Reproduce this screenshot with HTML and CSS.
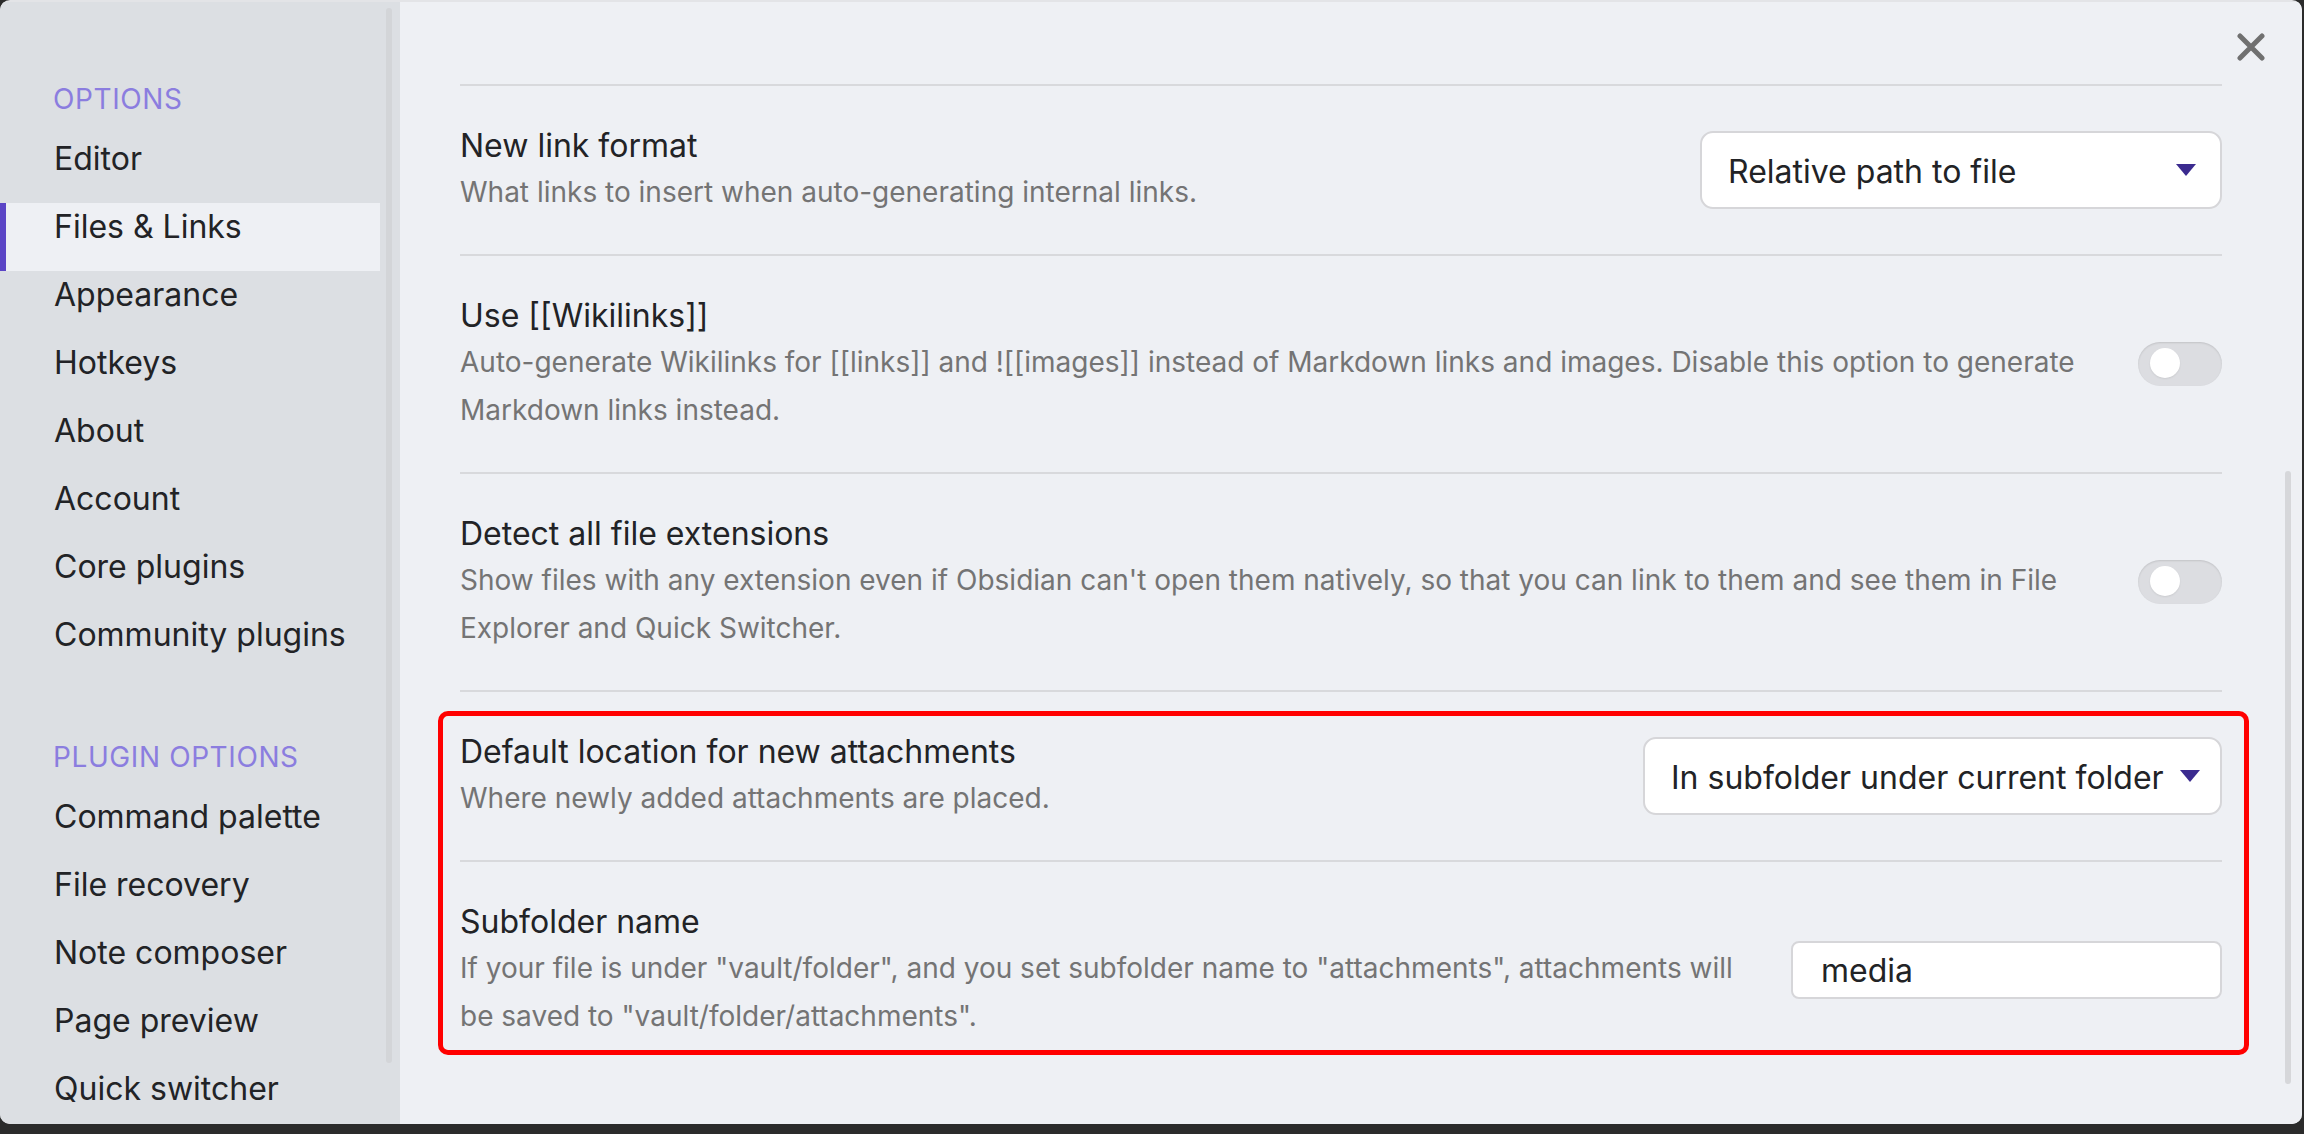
FILE: index.html
```html
<!DOCTYPE html>
<html lang="en">
<head>
<meta charset="utf-8">
<title>Settings — Files &amp; Links</title>
<link rel="stylesheet" href="styles.css">
</head>
<body>
<div class="window">
  <nav class="sidebar">
    <div class="nav-header">Options</div>
    <div class="nav-item">Editor</div>
    <div class="nav-item is-active">Files &amp; Links</div>
    <div class="nav-item">Appearance</div>
    <div class="nav-item">Hotkeys</div>
    <div class="nav-item">About</div>
    <div class="nav-item">Account</div>
    <div class="nav-item">Core plugins</div>
    <div class="nav-item">Community plugins</div>
    <div class="nav-header nav-header-second">Plugin options</div>
    <div class="nav-item">Command palette</div>
    <div class="nav-item">File recovery</div>
    <div class="nav-item">Note composer</div>
    <div class="nav-item">Page preview</div>
    <div class="nav-item">Quick switcher</div>
    <div class="sidebar-scroll"></div>
  </nav>
  <main class="content">
    <button class="close" aria-label="Close">
      <svg viewBox="0 0 28 28" width="28" height="28"><path d="M3 3 L25 25 M25 3 L3 25" stroke="#707070" stroke-width="5" stroke-linecap="round" fill="none"/></svg>
    </button>
    <div class="content-scroll"></div>
    <div class="settings">
      <div class="setting">
        <div class="info">
          <div class="name">New link format</div>
          <div class="desc">What links to insert when auto-generating internal links.</div>
        </div>
        <div class="control">
          <div class="dropdown dropdown-link"><span>Relative path to file</span><i class="caret"></i></div>
        </div>
      </div>
      <div class="setting">
        <div class="info">
          <div class="name">Use [[Wikilinks]]</div>
          <div class="desc">Auto-generate Wikilinks for [[links]] and ![[images]] instead of Markdown links and images. Disable this option to generate Markdown links instead.</div>
        </div>
        <div class="control">
          <div class="toggle"><div class="knob"></div></div>
        </div>
      </div>
      <div class="setting">
        <div class="info">
          <div class="name">Detect all file extensions</div>
          <div class="desc">Show files with any extension even if Obsidian can't open them natively, so that you can link to them and see them in File Explorer and Quick Switcher.</div>
        </div>
        <div class="control">
          <div class="toggle"><div class="knob"></div></div>
        </div>
      </div>
      <div class="highlight">
        <div class="setting">
          <div class="info">
            <div class="name">Default location for new attachments</div>
            <div class="desc">Where newly added attachments are placed.</div>
          </div>
          <div class="control">
            <div class="dropdown dropdown-attach"><span>In subfolder under current folder</span><i class="caret"></i></div>
          </div>
        </div>
        <div class="setting">
          <div class="info">
            <div class="name">Subfolder name</div>
            <div class="desc">If your file is under "vault/folder", and you set subfolder name to "attachments", attachments will be saved to "vault/folder/attachments".</div>
          </div>
          <div class="control">
            <div class="text-input">media</div>
          </div>
        </div>
      </div>
    </div>
  </main>
</div>
</body>
</html>
```
FILE: styles.css
```css
* { box-sizing: border-box; }

html, body {
  margin: 0;
  height: 1134px;
  overflow: hidden;
  background: #2b2b2b;
  font-family: Inter, "Noto Sans", sans-serif;
}

.window {
  width: 2302px;
  height: 1124px;
  border-radius: 10px;
  overflow: hidden;
  background: #e3e4e7;
  padding-top: 2px;
  display: grid;
  grid-template-columns: 400px 1fr;
}

/* ---------- sidebar ---------- */
.sidebar {
  position: relative;
  background: #dcdfe3;
  padding-top: 77px;
}

.nav-header {
  height: 40px;
  line-height: 40px;
  margin: 0 0 16px 53px;
  font-size: 28px;
  text-transform: uppercase;
  color: #8b7ddf;
  letter-spacing: 0.6px;
}

.nav-header-second { margin-top: 58px; }

.nav-item {
  height: 68px;
  width: 380px;
  padding-left: 54px;
  font-size: 32px;
  line-height: 48px;
  color: #222326;
}

.nav-item.is-active {
  background: #eef0f4;
  box-shadow: inset 6px 0 0 #5b45c6;
}

.sidebar-scroll {
  position: absolute;
  left: 386px;
  top: 6px;
  width: 6px;
  height: 1055px;
  border-radius: 3px;
  background: #d3d5d8;
}

/* ---------- content ---------- */
.content {
  position: relative;
  background: #eef0f4;
  padding: 82px 80px 0 60px;
}

.close {
  position: absolute;
  top: 31px;
  right: 37px;
  width: 28px;
  height: 28px;
  padding: 0;
  border: 0;
  background: none;
  display: flex;
}

.content-scroll {
  position: absolute;
  left: 1885px;
  top: 469px;
  width: 6px;
  height: 613px;
  border-radius: 3px;
  background: #d6d7da;
}

.setting {
  display: flex;
  align-items: center;
  border-top: 2px solid #d8d9dc;
  padding: 37px 0 38px;
}

.info {
  flex: 1 1 auto;
  margin-right: 40px;
}

.name {
  font-size: 32px;
  line-height: 45px;
  color: #222326;
}

.desc {
  font-size: 28px;
  line-height: 48px;
  color: #747474;
}

.control {
  flex: 0 0 auto;
  display: flex;
  justify-content: flex-end;
}

.dropdown {
  height: 78px;
  display: flex;
  align-items: center;
  justify-content: space-between;
  background: #ffffff;
  border: 2px solid #d6d6d9;
  border-radius: 13px;
  padding: 0 24px 0 26px;
  font-size: 32px;
  color: #222326;
  white-space: nowrap;
}

.dropdown span { padding-top: 4px; }

.dropdown-link { width: 522px; }
.dropdown-attach { width: 579px; }

.caret {
  flex: 0 0 auto;
  width: 0;
  height: 0;
  border-left: 10px solid transparent;
  border-right: 10px solid transparent;
  border-top: 12px solid #3b2b8f;
  margin-left: 16px;
}

.toggle {
  width: 84px;
  height: 44px;
  border-radius: 22px;
  background: #dcdde1;
  box-shadow: inset 0 1px 2px rgba(0, 0, 0, 0.12);
  padding: 6px 0 0 12px;
}

.knob {
  width: 30px;
  height: 30px;
  border-radius: 50%;
  background: #ffffff;
  box-shadow: 0 1px 2px rgba(0, 0, 0, 0.08);
}

.text-input {
  width: 431px;
  height: 58px;
  background: #ffffff;
  border: 2px solid #d6d6d9;
  border-radius: 8px;
  padding-left: 28px;
  font-size: 32px;
  line-height: 56px;
  color: #222326;
}

.highlight {
  position: relative;
}

.highlight::after {
  content: "";
  position: absolute;
  top: 21px;
  left: -22px;
  right: -27px;
  bottom: 23px;
  border: 5px solid #ff0000;
  border-radius: 10px;
  pointer-events: none;
}
```
